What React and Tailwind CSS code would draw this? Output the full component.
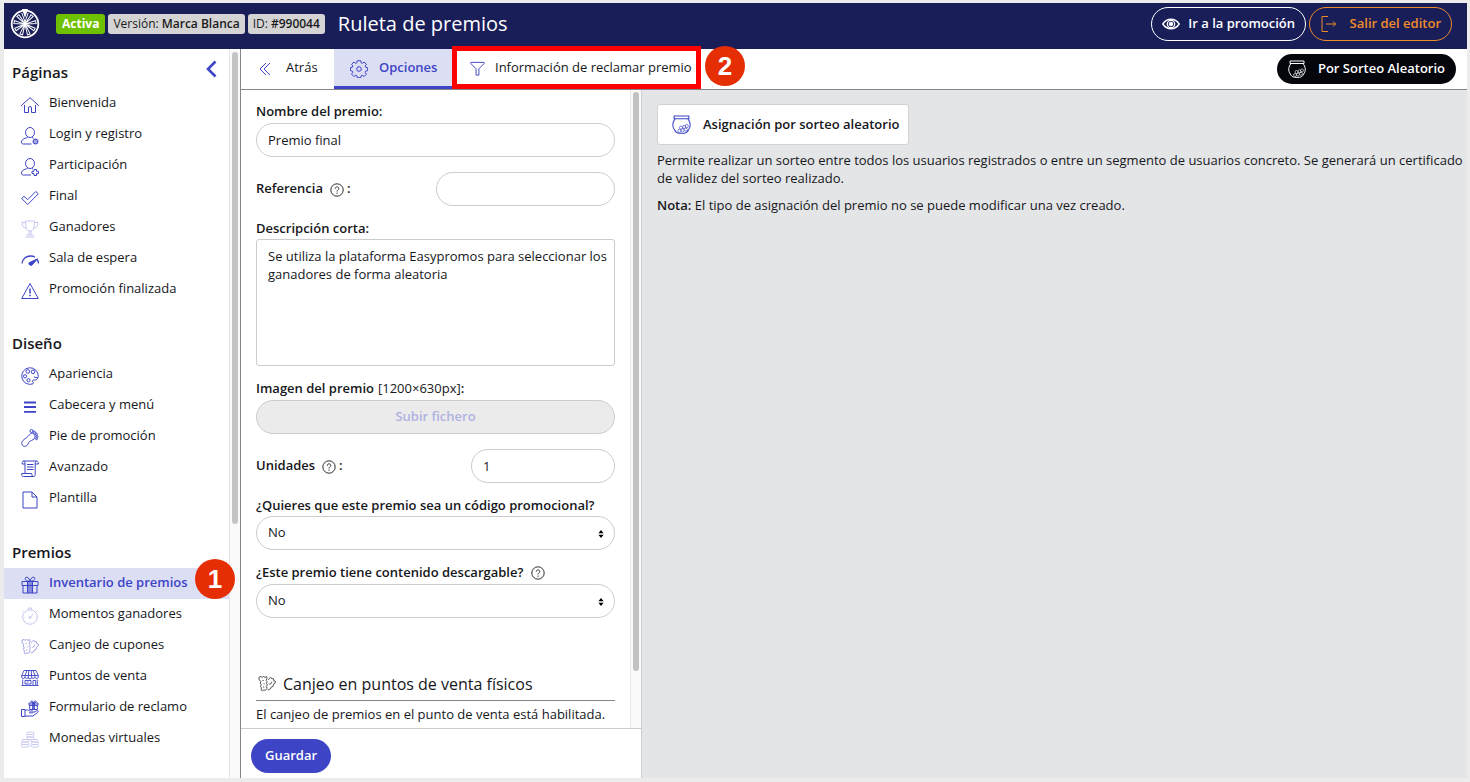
import React, { useState } from 'react';

const icons = {
  home: (
    <path d="M3.5 9v7.5h4V12a1.5 1.5 0 0 1 3 0v4.500h4V9M1.200 10.200.5 9.400 9 1.700l8.500 7.700-.7.800" />
  ),
  login: (
    <>
      <ellipse cx="9" cy="5.500" rx="4.500" ry="5" />
      <path d="M6.500 10.500C3 11.500.5 12.500.5 15c0 1.500.5 2 2 2h8M11 10.500l1.500.7" />
      <circle cx="14.500" cy="14.500" r="2.500" fill="currentColor" fillOpacity="0.5" />
    </>
  ),
  participation: (
    <>
      <ellipse cx="9" cy="5.500" rx="4.500" ry="5" />
      <path d="M6.500 10.500C3 11.500.5 12.500.5 15c0 1.500.5 2 2 2h7.500M11 10.500l1 .5" />
      <path d="M13 11.500h2.500V13.300h2V15.500h-2v2H13v-2h-2v-2.200h2z" />
    </>
  ),
  check: <path d="M.7 9.500 3 7.300l3.700 3.400L14.800 2.500l2.500 2.300L6.700 15.500z" />,
  trophy: (
    <>
      <path d="M4.500 1h9c0 6-1 10-4.500 10S4.500 7 4.500 1zM4.500 2.500H1c0 3.500 1 5 4 5.500M13.500 2.500H17c0 3.500-1 5-4 5.500M8 11v4M10 11v4M5.500 15h7M4.500 17h9" />
    </>
  ),
  gauge: (
    <>
      <path strokeWidth="1.300" d="M1 12.500C1.500 8 5 5 9.500 5c2 0 3.500.5 4.500 1.200M16 8.500c1 1.200 1.500 2.500 1.500 4" />
      <path fill="currentColor" d="M16.500 7.800 11.300 13.800a2 2 0 0 1-3.300-2z" />
    </>
  ),
  warning: (
    <>
      <path d="M9 1.500 17.300 16.500H.7z" />
      <path strokeWidth="1.500" d="M9 6.500v5M9 12.800v1.400" />
    </>
  ),
  palette: (
    <>
      <path d="M17.300 9.500A8.300 8.300 0 1 0 12 16.800c.8-.5.3-1.300-.3-2-.7-1 .2-2 1.300-1.800 2 .4 3.500-.5 4.300-3.500zM17 11l-4-1" />
      <circle cx="6.800" cy="4.500" r="1.800" />
      <circle cx="12" cy="4.800" r="1.800" />
      <circle cx="4" cy="9.300" r="1.600" />
      <circle cx="7.500" cy="13.200" r="1.600" />
    </>
  ),
  menu: <path strokeWidth="1.800" d="M3 4.500h12M3 9h12M3 13.800h12" />,
  foot: (
    <>
      <path d="M9.500 4.500C8 6.500 6.500 8 3 10.500c-2.500 2-2.800 4.500-1.500 6 1.500 1.500 4.500 1 5.500-1.500.8-2.500 1.500-2.500 3.500-3.500 2.500-1.300 3.500-2 3.500-4C13.500 5 11.500 3.500 9.500 4.500z" />
      <circle cx="10.500" cy="2" r="1.500" />
      <circle cx="13.300" cy="3.200" r="1.100" />
      <circle cx="15.200" cy="5.200" r="1.100" />
      <circle cx="16" cy="7.600" r="1" />
      <circle cx="15.500" cy="9.800" r=".9" />
    </>
  ),
  scroll: (
    <>
      <path d="M4 13V3c0-1.500-.7-2-1.500-2S1 2 1.200 4H4M2.500 1h13c1.200 0 2 1 1.800 3h-3M15.500 1c-1 0-1.300 1-1.300 2v11.500c0 1.500-.7 2-1.700 2h-10C1 16.500.5 15.500.7 13.500h10c0 2 .8 3 1.800 3" />
      <path d="M6 4.500h6.500M6 7h6.500M6 9.500h6.500" />
    </>
  ),
  file: <path d="M2 1h9l5 5v11H2zM11 1v5h5" />,
  gift: (
    <>
      <path d="M1 5.500h16v4H1zM2 9.500h14v7.500H2zM6.500 5.500v11.500M11.500 5.500v11.500" />
      <path fill="currentColor" fillOpacity="0.550" stroke="none" d="M7 5.500h4v11.500H7z" />
      <path d="M9 5.200C5 4.800 3.800 3.800 4.200 2.200 5 .2 8 1 9 5.200zM9 5.200c4-.4 5.200-1.400 4.800-3C13 .2 10 1 9 5.200z" />
    </>
  ),
  stopwatch: (
    <>
      <circle cx="9" cy="10" r="7.300" />
      <path d="M7.500 2.500V1h3v1.500M2.500 4.500l-1-1M15.500 4.500l1-1M9 5V4.500M9 15.500V15M3.500 10H4M14 10h.5" />
      <circle cx="9" cy="10.500" r="1" />
      <path d="m9.700 9.800 2.200-2.500" />
    </>
  ),
  coupons: (
    <g strokeWidth="0.900">
      <path d="M1 2.200 3 1.500l1 .9 1.500-.9 1.500.9 1.500-.9.5 2-.8 1.800 1 1.500-.8 1.500 1 1.700-1 1.500.8 2L7 15.500l-1-.8-1.500 1-1.500-.8.5-2-1-1.500.7-1.800-1-1.500.7-1.700L1 4.800z" />
      <path d="m10 4.800 2.700-2.600.8 1.500h2l.2 2 1.800.6-.5 2-1.600 1-.2 2-2 .8-.7 1.800-2.700 1.200M4.500 5.500h1.200M6 8.300v1M11 8.500l1 1 2-2.700M5 12h1.200" />
    </g>
  ),
  store: (
    <g strokeWidth="0.900">
      <path d="M3 1.500h12L17.300 6.500v1.700a1.700 1.700 0 0 1-3.300 0 1.700 1.700 0 0 1-3.300 0 1.700 1.700 0 0 1-3.400 0 1.700 1.700 0 0 1-3.300 0 1.700 1.700 0 0 1-3.300 0V6.500zM.7 6.500h16.600M6 1.500 4 6.500v1.700M7.800 1.500l-.5 6.700M10.200 1.500l.5 6.700M12 1.500l2 5v1.700" />
      <path d="M1.700 10.500V16.500M16.300 10.500v6M4 11.500h6V15H4zM5.500 14l2-1.700M12 16.500v-5h2.700v5M.5 16.500h17" />
    </g>
  ),
  handGift: (
    <>
      <path d="M.5 9.500H4v7H.5zM4 10.500c2-1 3.500-.5 4.500.5h3c1 .2 1 1.700 0 1.800H8M12.500 12.500l3-1.700c1.500-.6 2.300.6 1.300 1.500L12 16H4" />
      <path d="M8 3h9v2.200H8zM8.700 5.200h7.600v4.300H8.700z" />
      <path fill="currentColor" fillOpacity="0.700" d="M11.700 3h1.600v6.500h-1.600z" />
      <path d="M12.500 3C11 3 9.800 2.500 10 1.300c.5-1 2-.3 2.500 1.700C13 1 14.500.3 15 1.300c.2 1.200-1 1.700-2.500 1.700z" />
    </>
  ),
  coins: (
    <g strokeWidth="0.900">
      <rect x="6" y="1" width="7" height="2.500" rx="1" />
      <rect x="5.500" y="3.500" width="7" height="2.500" rx="1" />
      <rect x="6" y="6" width="7" height="2.500" rx="1" />
      <rect x="1" y="8.500" width="7" height="2.500" rx="1" />
      <rect x=".5" y="11" width="7" height="2.500" rx="1" />
      <rect x=".5" y="13.500" width="7.500" height="2.500" rx="1" />
      <rect x="10" y="8.500" width="7" height="2.500" rx="1" />
      <rect x="10.300" y="11" width="7" height="2.500" rx="1" />
      <rect x="10" y="13.500" width="7.500" height="2.500" rx="1" />
    </g>
  ),
  back: <path d="M9 3 3 9l6 6M13 3 7 9l6 6" />,
  gear: (
    <>
      <circle cx="9" cy="9" r="2.300" />
      <path d="M7.300.7h3.400l.4 2.100 1.200.5 1.800-1.300 2.300 2.300-1.200 1.800.5 1.200 2 .4v2.900l-2 .5-.5 1.300 1.200 1.800-2.300 2.300-1.800-1.200-1.200.5-.4 1.900H7.300l-.4-1.900-1.200-.5-1.800 1.200-2.300-2.300 1.200-1.800-.5-1.300-1.900-.5V7.700l1.900-.4.5-1.200-1.200-1.800L3.900 2l1.800 1.300 1.200-.5z" />
    </>
  ),
  filter: <path d="M2 2.500h14v1.300L10.500 9.300V16H7.500V9.300L2 3.800z" />,
  jar: (
    <>
      <path d="M2 1h14v2.500H2zM3.200 3.500C.2 6.500 0 11 2.300 14c1 2 2.500 3.300 4.200 3.300h5c1.700 0 3.200-1.300 4.200-3.300 2.300-3 2.100-7.500-.9-10.500" />
      <g strokeWidth="0.600">
        <circle cx="7" cy="15" r="1.500" />
        <circle cx="10" cy="14.500" r="1.500" />
        <circle cx="13" cy="13.800" r="1.500" />
        <circle cx="8.500" cy="12" r="1.500" />
        <circle cx="11.500" cy="11.300" r="1.500" />
        <circle cx="14" cy="10.500" r="1.500" />
      </g>
    </>
  ),
  exit: <path d="M8 1.500H2v15h6M6 9h9.500M13 6.300 15.700 9 13 11.700" />,
  eye: (
    <>
      <path strokeWidth="1.400" d="M.8 9C3 5.700 5.800 4.200 9 4.200s6 1.500 8.200 4.800c-2.200 3.300-5 4.800-8.200 4.800S3 12.300.8 9z" />
      <circle cx="9" cy="9" r="3.700" strokeWidth="1.200" />
      <circle cx="9" cy="9" r="1.800" fill="currentColor" />
    </>
  ),
};

const Icon = ({ name, className = 'size-[18px]' }) => (
  <svg
    viewBox="0 0 18 18"
    className={`shrink-0 ${className}`}
    fill="none"
    stroke="currentColor"
    strokeWidth="1"
    strokeLinejoin="round"
    aria-hidden="true"
  >
    {icons[name]}
  </svg>
);

const WheelLogo = () => (
  <svg viewBox="0 0 30 30" className="size-[30px] shrink-0 text-white" fill="none" stroke="currentColor" aria-hidden="true">
    <circle cx="15" cy="15" r="13.300" strokeWidth="1.800" />
    <circle cx="15" cy="15" r="2.200" fill="currentColor" stroke="none" />
    {[40, 80, 120, 160, 200, 240, 280, 320].map((angle) => (
      <path key={angle} d="M14.700 13 13.600 4h2.800L15.300 13" strokeWidth="1" transform={`rotate(${angle} 15 15)`} />
    ))}
    <path d="M12 0h6l-3 9z" fill="currentColor" stroke="none" />
    <path d="m11.800 4 3.200 9 3.200-9" strokeWidth="1" />
  </svg>
);

const sections = [
  {
    title: 'Páginas',
    items: [
      { label: 'Bienvenida', icon: 'home' },
      { label: 'Login y registro', icon: 'login' },
      { label: 'Participación', icon: 'participation' },
      { label: 'Final', icon: 'check' },
      { label: 'Ganadores', icon: 'trophy', disabled: true },
      { label: 'Sala de espera', icon: 'gauge' },
      { label: 'Promoción finalizada', icon: 'warning' },
    ],
  },
  {
    title: 'Diseño',
    items: [
      { label: 'Apariencia', icon: 'palette' },
      { label: 'Cabecera y menú', icon: 'menu' },
      { label: 'Pie de promoción', icon: 'foot' },
      { label: 'Avanzado', icon: 'scroll' },
      { label: 'Plantilla', icon: 'file' },
    ],
  },
  {
    title: 'Premios',
    items: [
      { label: 'Inventario de premios', icon: 'gift', step: 1 },
      { label: 'Momentos ganadores', icon: 'stopwatch', disabled: true },
      { label: 'Canjeo de cupones', icon: 'coupons', faded: true },
      { label: 'Puntos de venta', icon: 'store' },
      { label: 'Formulario de reclamo', icon: 'handGift' },
      { label: 'Monedas virtuales', icon: 'coins', disabled: true },
    ],
  },
];

const StepBadge = ({ number, className }) => (
  <span
    className={`absolute z-20 flex size-10 items-center justify-center rounded-full bg-[#e62e05] font-['Liberation_Sans',sans-serif] text-[26px] font-bold text-white ${className}`}
  >
    {number}
  </span>
);

const HelpIcon = () => (
  <svg viewBox="0 0 14 14" className="size-[14px] shrink-0" fill="none" stroke="currentColor" aria-label="Ayuda" role="img">
    <circle cx="7" cy="7" r="6.200" strokeWidth="0.900" />
    <path d="M5.200 5.700c0-2.400 3.600-2.400 3.600-.2C8.800 7 7 6.900 7 8.500M7 9.600v1.200" strokeWidth="0.900" />
  </svg>
);

const Sidebar = ({ active, onSelect }) => (
  <aside className="flex w-[237px] shrink-0 border-r border-[#85858a] bg-white">
    <nav className="relative min-w-0 flex-1 pt-2">
      <button aria-label="Contraer menú" className="absolute top-[11px] right-3 text-[#3d44c6]">
        <svg viewBox="0 0 12 18" className="h-[18px] w-3" fill="none" stroke="currentColor" strokeWidth="2.600" aria-hidden="true">
          <path d="M10.500 1.500 3 9l7.500 7.500" />
        </svg>
      </button>
      {sections.map((section) => (
        <div key={section.title} className="mb-[23px]">
          <h2 className="flex h-[31px] items-center pl-2 text-[15px] font-semibold">{section.title}</h2>
          <ul>
            {section.items.map((item) => (
              <li key={item.label} className="relative">
                <a
                  href="#"
                  onClick={() => onSelect(item.label)}
                  className={`flex h-[31px] items-center gap-2.5 pb-px pl-[17px] whitespace-nowrap ${
                    active === item.label ? 'bg-[#dcdef4] font-semibold text-[#3d44c6]' : ''
                  }`}
                >
                  <Icon
                    name={item.icon}
                    className={`mt-[3px] size-[18px] ${
                      item.disabled ? 'text-[#c5c7ee]' : item.faded ? 'text-[#9599de]' : 'text-[#3d44c6]'
                    }`}
                  />
                  {item.label}
                </a>
                {item.step && <StepBadge number={item.step} className="-top-[9px] -right-1.5" />}
              </li>
            ))}
          </ul>
        </div>
      ))}
    </nav>
    <div className="w-[11px] border-l border-[#e6e6e6] bg-[#fafafa] pt-[3px]">
      <div className="mx-auto h-[65%] w-1.5 rounded-full bg-[#c4c4c4]" />
    </div>
  </aside>
);

const Header = () => (
  <header className="flex h-[46px] shrink-0 items-center bg-[#191e59] pr-[15px] pb-1 pl-[6px] text-white">
    <WheelLogo />
    <div className="ml-4 flex gap-[3px] text-xs whitespace-nowrap text-[#1b1b1b]">
      <span className="flex h-5 items-center rounded-[3px] bg-[#6fc000] px-1.5 font-bold text-white">Activa</span>
      <span className="flex h-5 items-center gap-[3px] rounded-[3px] bg-[#d4d4d4] px-[5px]">
        Versión: <span className="font-semibold">Marca Blanca</span>
      </span>
      <span className="flex h-5 items-center gap-[3px] rounded-[3px] bg-[#d4d4d4] px-[5px]">
        ID: <span className="font-semibold">#990044</span>
      </span>
    </div>
    <h1 className="ml-[13px] text-xl">Ruleta de premios</h1>
    <div className="ml-auto flex gap-[3px] font-semibold">
      <a href="#" className="flex h-[34px] w-[155px] items-center justify-between rounded-full border border-white px-2.5">
        <Icon name="eye" />
        Ir a la promoción
      </a>
      <a href="#" className="flex h-[34px] w-[143px] items-center justify-between rounded-full border border-[#e98a2d] px-2.5 text-[#f08c2a]">
        <Icon name="exit" />
        Salir del editor
      </a>
    </div>
  </header>
);

const TabBar = () => (
  <div className="flex h-[41px] shrink-0 items-stretch border-b border-[#85858a] bg-white">
    <button className="flex w-[93px] items-center gap-[11px] pb-[3px] pl-4">
      <Icon name="back" className="mt-0.5 size-[18px] text-[#3d44c6]" />
      Atrás
    </button>
    <button className="flex w-[119px] items-center gap-[11px] border-b-3 border-[#3d44c6] bg-[#dcdef4] pl-4 font-semibold text-[#3d44c6]">
      <Icon name="gear" className="mt-0.5 size-[18px]" />
      Opciones
    </button>
    <button className="relative flex w-[247px] items-center gap-[9px] pb-[3px] pl-4 whitespace-nowrap">
      <Icon name="filter" className="mt-0.5 size-[17px] text-[#3d44c6]" />
      Información de reclamar premio
      <span className="pointer-events-none absolute -inset-x-px -top-[3px] bottom-0 border-5 border-[#fe0000]" />
      <StepBadge number={2} className="-top-[3px] -right-[45px]" />
    </button>
    <button className="my-[5px] mr-[11px] ml-auto flex w-[179px] items-center justify-between rounded-full bg-[#04060c] px-[11px] font-semibold whitespace-nowrap text-white">
      <Icon name="jar" />
      Por Sorteo Aleatorio
    </button>
  </div>
);

const SelectField = ({ id }) => (
  <div className="relative">
    <select id={id} className="h-[34px] w-full appearance-none rounded-full border border-[#ccc] bg-white px-[11px]">
      <option>No</option>
      <option>Sí</option>
    </select>
    <svg viewBox="0 0 6 8" className="pointer-events-none absolute top-[14px] right-[11px] h-2 w-1.5" aria-hidden="true">
      <path d="M3 0l2.600 3.200H.4zM.4 4.800h5.200L3 8z" />
    </svg>
  </div>
);

const PrizeForm = () => {
  const [name, setName] = useState('Premio final');
  const [reference, setReference] = useState('');
  const [units, setUnits] = useState('1');
  const [description, setDescription] = useState(
    'Se utiliza la plataforma Easypromos para seleccionar los ganadores de forma aleatoria'
  );

  return (
    <form className="flex w-[401px] shrink-0 flex-col border-r border-[#d0d0d2] bg-white">
      <div className="flex min-h-0 flex-1">
        <div className="min-w-0 flex-1 overflow-hidden px-[15px] pt-3">
          <label htmlFor="name" className="flex h-[21px] items-center pb-px font-semibold">Nombre del premio:</label>
          <input
            id="name"
            value={name}
            onChange={(e) => setName(e.target.value)}
            className="h-[34px] w-full rounded-full border border-[#ccc] px-[11px] pb-px"
          />

          <div className="mt-[15px] flex items-center justify-between">
            <label htmlFor="reference" className="flex items-center font-semibold">
              Referencia <span className="mt-0.5 mr-[3px] ml-[7px]"><HelpIcon /></span>:
            </label>
            <input
              id="reference"
              value={reference}
              onChange={(e) => setReference(e.target.value)}
              className="h-[34px] w-[179px] rounded-full border border-[#ccc] px-[11px] pb-px"
            />
          </div>

          <label htmlFor="description" className="mt-3 flex h-[21px] items-center font-semibold">Descripción corta:</label>
          <textarea
            id="description"
            value={description}
            onChange={(e) => setDescription(e.target.value)}
            className="block h-[127px] w-full resize-none rounded-[3px] border border-[#ccc] py-[7px] pr-1 pl-[11px] leading-[18px]"
          />

          <label htmlFor="image" className="mt-[13px] flex h-[21px] items-center pb-px font-semibold">
            Imagen del premio <span className="ml-1 font-normal">[1200×630px]</span>:
          </label>
          <button
            id="image"
            type="button"
            disabled
            className="h-[34px] w-full rounded-full border border-[#ccc] bg-[#ebebeb] font-semibold text-[#b0b2e2]"
          >
            Subir fichero
          </button>

          <div className="mt-[15px] flex items-center justify-between">
            <label htmlFor="units" className="flex items-center font-semibold">
              Unidades <span className="mt-0.5 mr-[3px] ml-[7px]"><HelpIcon /></span>:
            </label>
            <input
              id="units"
              value={units}
              onChange={(e) => setUnits(e.target.value)}
              className="h-[34px] w-[144px] rounded-full border border-[#ccc] px-[11px] pb-px"
            />
          </div>

          <label htmlFor="promo" className="mt-3 flex h-[21px] items-center font-semibold">
            ¿Quieres que este premio sea un código promocional?
          </label>
          <SelectField id="promo" />

          <label htmlFor="download" className="mt-[13px] flex h-[21px] items-center gap-2 pb-px font-semibold">
            ¿Este premio tiene contenido descargable? <HelpIcon />
          </label>
          <SelectField id="download" />

          <h2 className="mt-[50px] flex h-[33px] items-center gap-[7px] border-b border-[#85858a] pl-0.5 text-base">
            <Icon name="coupons" className="size-[18px] text-[#444]" />
            Canjeo en puntos de venta físicos
          </h2>
          <p className="mt-1 leading-[18px] whitespace-nowrap">El canjeo de premios en el punto de venta está habilitada.</p>
        </div>
        <div className="w-[11px] border-l border-[#e6e6e6] bg-[#fafafa] pt-0.5">
          <div className="mx-auto h-[91%] w-1.5 rounded-full bg-[#c1c1c1]" />
        </div>
      </div>
      <div className="flex h-[50px] shrink-0 items-center border-t border-[#ccc] px-2.5 pt-1">
        <button type="button" className="h-[34px] w-20 rounded-full bg-[#3d44c6] font-semibold text-white">Guardar</button>
      </div>
    </form>
  );
};

const AssignmentPanel = () => (
  <section className="min-w-0 flex-1 pt-[14px] pl-[15px]">
    <div className="flex h-[41px] w-[252px] items-center gap-3 rounded-[3px] border border-[#d2d2d4] bg-white pl-3.5 font-semibold whitespace-nowrap">
      <Icon name="jar" className="size-[19px] text-[#3d44c6]" />
      Asignación por sorteo aleatorio
    </div>
    <p className="mt-[6px] leading-[18px]">
      Permite realizar un sorteo entre todos los usuarios registrados o entre un segmento de usuarios concreto. Se generará un certificado de validez del sorteo realizado.
    </p>
    <p className="mt-[9px] leading-[18px]">
      <span className="font-semibold">Nota:</span> El tipo de asignación del premio no se puede modificar una vez creado.
    </p>
  </section>
);

const App = () => {
  const [active, setActive] = useState('Inventario de premios');

  return (
    <div className="flex h-screen flex-col border-t-3 border-r-3 border-b-4 border-l-4 border-[#ececed] bg-[#e4e5e7] font-['Open_Sans',sans-serif] text-[13px] text-[#16171b]">
      <Header />
      <div className="flex min-h-0 flex-1">
        <Sidebar active={active} onSelect={setActive} />
        <main className="flex min-w-0 flex-1 flex-col">
          <TabBar />
          <div className="flex min-h-0 flex-1">
            <PrizeForm />
            <AssignmentPanel />
          </div>
        </main>
      </div>
    </div>
  );
};

export default App;
